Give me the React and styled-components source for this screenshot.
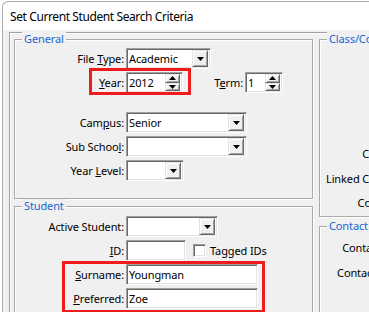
import React from "react";
import styled, { createGlobalStyle } from "styled-components";

const GlobalStyle = createGlobalStyle`
  html, body { margin: 0; padding: 0; background: #fff; }
  body {
    font-family: "Noto Sans", "Liberation Sans", sans-serif;
    font-size: 11px;
    letter-spacing: -0.12px;
    color: #000;
    overflow: hidden;
  }
`;

const Window = styled.div`
  margin: 1px 0 0 2px;
  width: 420px;
  height: 340px;
  border-left: 1px solid #adadad;
  border-top: 1px solid #adadad;
  border-top-left-radius: 6px;
  background: #f0f0f0;
  overflow: hidden;
`;

const TitleBar = styled.div`
  height: 28px;
  background: #fff;
  padding-left: 7px;
  display: flex;
  align-items: center;
  font-size: 12px;
  letter-spacing: -0.4px;
  border-top-left-radius: 6px;
`;

const Client = styled.div`
  padding: 2px 0 0 6px;
`;

const Panel = styled.div`
  display: flex;
  gap: 6px;
  padding: 6px 0 0 4px;
  border-top: 1px solid #a0a0a0;
  border-left: 1px solid #a0a0a0;
  box-shadow: inset 1px 1px 0 #fff;
`;

const Column = styled.div`
  display: flex;
  flex-direction: column;
  gap: ${(p) => p.$gap}px;
  width: ${(p) => p.$width}px;
  flex-shrink: 0;
`;

const GroupBox = styled.div`
  position: relative;
  box-sizing: border-box;
  height: ${(p) => p.$height}px;
  padding: ${(p) => p.$pad};
  border: 1px solid #a9a9a9;
  box-shadow: inset 1px 1px 0 #fff, 1px 1px 0 #fff;
  display: flex;
  flex-direction: column;
  gap: 3px;
`;

const Caption = styled.span`
  position: absolute;
  top: -8px;
  left: 7px;
  padding: 0 2px;
  background: #f0f0f0;
  color: #1a66d2;
  font-size: 11px;
  line-height: 14px;
`;

const Row = styled.div`
  display: flex;
  align-items: center;
  height: 21px;
  margin-top: ${(p) => p.$top || 0}px;
`;

const Label = styled.label`
  width: ${(p) => p.$width || 111}px;
  flex-shrink: 0;
  text-align: right;
  padding-right: 2px;
  box-sizing: border-box;
  white-space: nowrap;
  margin-left: ${(p) => p.$offset || 0}px;
`;

const Field = styled.div`
  position: relative;
  box-sizing: border-box;
  width: ${(p) => p.$width}px;
  height: 21px;
  flex-shrink: 0;
  background: #fff;
  border-top: 1px solid #a0a0a0;
  border-left: 1px solid #a0a0a0;
  border-bottom: 1px solid #fff;
  border-right: 1px solid #fff;
  box-shadow: inset 1px 1px 0 #696969, inset -1px -1px 0 #e3e3e3;
  display: flex;
  align-items: center;
  padding: 0 2px 0 2px;
`;

const FieldText = styled.span`
  flex: 1;
  white-space: nowrap;
  overflow: hidden;
`;

const DropButton = styled.span`
  box-sizing: border-box;
  width: 16px;
  height: 17px;
  background: #f0f0f0;
  border-top: 1px solid #e3e3e3;
  border-left: 1px solid #e3e3e3;
  border-right: 1px solid #696969;
  border-bottom: 1px solid #696969;
  box-shadow: inset 1px 1px 0 #fff, inset -1px -1px 0 #a0a0a0;
  display: flex;
  align-items: center;
  justify-content: center;
  flex-shrink: 0;
`;

const SpinStack = styled.span`
  display: flex;
  flex-direction: column;
  flex-shrink: 0;
`;

const SpinButton = styled(DropButton)`
  width: 15px;
  height: 8.5px;
`;

const Arrow = ({ up }) => (
  <svg width="7" height="4" viewBox="0 0 7 4">
    <path d={up ? "M3.5 0 L7 4 L0 4 Z" : "M0 0 L7 0 L3.5 4 Z"} fill="#000" />
  </svg>
);

const Check = styled.span`
  box-sizing: border-box;
  width: 13px;
  height: 13px;
  margin-left: 7px;
  background: #fff;
  border-top: 1px solid #a0a0a0;
  border-left: 1px solid #a0a0a0;
  border-bottom: 1px solid #fff;
  border-right: 1px solid #fff;
  box-shadow: inset 1px 1px 0 #696969, inset -1px -1px 0 #e3e3e3;
  flex-shrink: 0;
`;

const CheckText = styled.span`
  margin-left: 4px;
  white-space: nowrap;
`;

const Highlight = styled.div`
  position: absolute;
  left: ${(p) => p.$x}px;
  top: ${(p) => p.$y}px;
  width: ${(p) => p.$w}px;
  height: ${(p) => p.$h}px;
  box-sizing: border-box;
  border: 3px solid #ee1c1c;
  pointer-events: none;
`;

const Combo = ({ width, value }) => (
  <Field $width={width}>
    <FieldText>{value}</FieldText>
    <DropButton>
      <Arrow />
    </DropButton>
  </Field>
);

const Spin = ({ width, value }) => (
  <Field $width={width}>
    <FieldText>{value}</FieldText>
    <SpinStack>
      <SpinButton>
        <Arrow up />
      </SpinButton>
      <SpinButton>
        <Arrow />
      </SpinButton>
    </SpinStack>
  </Field>
);

const Edit = ({ width, value }) => (
  <Field $width={width}>
    <FieldText>{value}</FieldText>
  </Field>
);

export default function App() {
  return (
    <>
      <GlobalStyle />
      <Window>
        <TitleBar>Set Current Student Search Criteria</TitleBar>
        <Client>
          <Panel>
            <Column $width={299} $gap={7}>
              <GroupBox $height={160} $pad="8px 0 0 0">
                <Caption>General</Caption>
                <Row>
                  <Label>File <u>T</u>ype:</Label>
                  <Combo width={85} value="Academic" />
                </Row>
                <Row>
                  <Label><u>Y</u>ear:</Label>
                  <Spin width={57} value="2012" />
                  <Label $width={34} $offset={28}>T<u>e</u>rm:</Label>
                  <Spin width={38} value="1" />
                </Row>
                <Row $top={16}>
                  <Label>Cam<u>p</u>us:</Label>
                  <Combo width={121} value="Senior" />
                </Row>
                <Row>
                  <Label>Sub Schoo<u>l</u>:</Label>
                  <Combo width={121} value="" />
                </Row>
                <Row>
                  <Label>Year <u>L</u>evel:</Label>
                  <Combo width={58} value="" />
                </Row>
                <Highlight $x={74} $y={28} $w={102} $h={27} />
              </GroupBox>
              <GroupBox $height={140} $pad="9px 0 0 0">
                <Caption>Student</Caption>
                <Row>
                  <Label>Active Student:</Label>
                  <Combo width={92} value="" />
                </Row>
                <Row>
                  <Label><u>I</u>D:</Label>
                  <Edit width={60} value="" />
                  <Check />
                  <CheckText>Tagged IDs</CheckText>
                </Row>
                <Row>
                  <Label><u>S</u>urname:</Label>
                  <Edit width={132} value="Youngman" />
                </Row>
                <Row>
                  <Label><u>P</u>referred:</Label>
                  <Edit width={132} value="Zoe" />
                </Row>
                <Highlight $x={47} $y={54} $w={203} $h={52} />
              </GroupBox>
            </Column>
            <Column $width={200} $gap={9}>
              <GroupBox $height={178} $pad="103px 0 0 0">
                <Caption>Class/Course</Caption>
                <Row>
                  <Label $width={73}>Class:</Label>
                </Row>
                <Row $top={1}>
                  <Label $width={73}>Linked Class:</Label>
                </Row>
                <Row>
                  <Label $width={73}>Count:</Label>
                </Row>
              </GroupBox>
              <GroupBox $height={120} $pad="10px 0 0 0">
                <Caption>Contact</Caption>
                <Row>
                  <Label $width={66}>Contact:</Label>
                </Row>
                <Row $top={1}>
                  <Label $width={66}>Contacts:</Label>
                </Row>
              </GroupBox>
            </Column>
          </Panel>
        </Client>
      </Window>
    </>
  );
}
